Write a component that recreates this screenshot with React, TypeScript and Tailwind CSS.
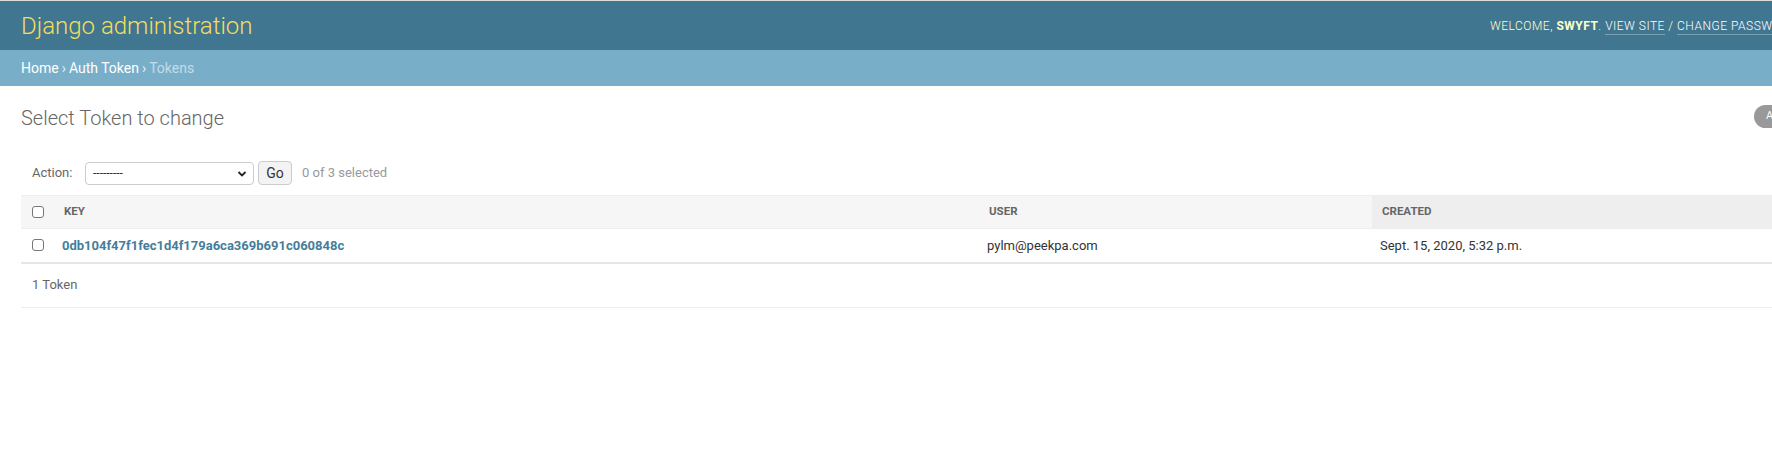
import React from "react";

function Box() {
  return <span className="block w-[12px] h-[12px] rounded-[3px] border border-[#767676] bg-white" />;
}

export default function App() {
  return (
    <div className="w-[1772px] h-[450px] overflow-hidden bg-white font-['Roboto','Liberation_Sans',sans-serif] text-[13px] text-[#333]">
      <div className="w-[2000px]">
        <div className="h-px bg-[#dcdcdc]" />
        <header className="h-[49px] bg-[#417690] flex items-center pl-[21px]">
          <div className="w-[1469px] shrink-0 text-[24px] font-light text-[#f5dd5d] leading-none">Django administration</div>
          <div className="whitespace-nowrap text-[12px] uppercase tracking-[0.5px] text-[#ffc] font-light">
            Welcome, <strong className="font-bold">swyft</strong>.{" "}
            <a className="text-white border-b border-[rgba(255,255,255,0.3)] pb-[1px]">View site</a> /{" "}
            <a className="text-white border-b border-[rgba(255,255,255,0.3)] pb-[1px]">Change password</a> /{" "}
            <a className="text-white border-b border-[rgba(255,255,255,0.3)] pb-[1px]">Log out</a>
          </div>
        </header>
        <nav className="h-[36px] bg-[#79aec8] pl-[21px] flex items-center text-[14px] text-white">
          <a>Home</a>
          <span className="mx-[3px] text-[#e0eef5]">›</span>
          <a>Auth Token</a>
          <span className="mx-[3px] text-[#e0eef5]">›</span>
          <span className="text-[#c4dce8]">Tokens</span>
        </nav>
        <main className="pl-[21px] pt-[20px]">
          <div className="flex items-start">
            <h1 className="w-[1733px] shrink-0 text-[20px] font-light text-[#666] leading-[24px]">Select Token to change</h1>
            <a className="-mt-px h-[23px] rounded-full bg-[#999] text-white text-[11px] uppercase flex items-center px-[12px] whitespace-nowrap font-normal tracking-[0.5px]">Add Token +</a>
          </div>
          <div className="mt-[31px] flex items-center h-[24px] text-[13px] text-[#666]">
            <span className="ml-[11px] w-[53px]">Action:</span>
            <div className="relative w-[169px] h-[23px] rounded-[4px] border border-[#ccc] bg-white flex items-center pl-[7px] text-[#333]">
              <span className="text-[12px] leading-none">---------</span>
              <svg className="absolute right-[6px] top-[7px]" width="10" height="8" viewBox="0 0 10 8">
                <path d="M1.5 2 L5 5.5 L8.5 2" fill="none" stroke="#222" strokeWidth="1.8" />
              </svg>
            </div>
            <button className="ml-[4px] w-[34px] h-[24px] rounded-[4px] border border-[#ccc] bg-[#f3f3f3] text-[14px] text-[#333]">Go</button>
            <span className="ml-[10px] text-[#999]">0 of 3 selected</span>
          </div>
          <table className="mt-[10px] w-[1900px] table-fixed border-collapse">
            <colgroup>
              <col className="w-[33px]" />
              <col className="w-[925px]" />
              <col className="w-[393px]" />
              <col />
            </colgroup>
            <thead>
              <tr className="h-[33px] bg-[#f6f6f6] border-t border-[#eee] border-b border-b-[#eee]">
                <th className="pl-[11px] text-left align-middle"><Box /></th>
                <th className="pl-[10px] text-left text-[11.5px] font-bold uppercase text-[#666]">Key</th>
                <th className="pl-[10px] text-left text-[11.5px] font-bold uppercase text-[#666]">User</th>
                <th className="pl-[10px] text-left text-[11.5px] font-bold uppercase text-[#666] bg-[#eee]">Created</th>
              </tr>
            </thead>
            <tbody>
              <tr className="h-[34px] border-b-2 border-[#e6e6e6]">
                <td className="pl-[11px] align-middle"><Box /></td>
                <td className="pl-[8px] font-bold text-[#447e9b]">0db104f47f1fec1d4f179a6ca369b691c060848c</td>
                <td className="pl-[8px]">pylm@peekpa.com</td>
                <td className="pl-[8px]">Sept. 15, 2020, 5:32 p.m.</td>
              </tr>
            </tbody>
          </table>
          <div className="w-[1900px] h-[44px] border-b border-[#eee] flex items-center pl-[11px] text-[#666]">1 Token</div>
        </main>
      </div>
    </div>
  );
}
